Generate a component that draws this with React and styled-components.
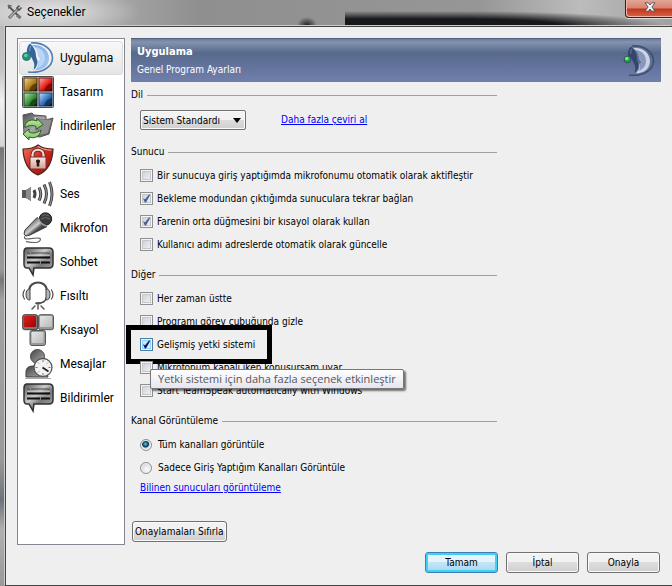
import React, { useState } from 'react'
import styled, { createGlobalStyle } from 'styled-components'

const TeamSpeakIcon = ({ dim }) => (
  <svg viewBox="0 0 32 32" width="32" height="32" aria-hidden="true">
    <defs>
      <linearGradient id={dim ? 'faceDim' : 'face'} x1="0" y1="0" x2="1" y2="1">
        <stop offset="0" stopColor={dim ? '#d5dcea' : '#7fabe2'} />
        <stop offset="1" stopColor={dim ? '#c3cce0' : '#a5c8f2'} />
      </linearGradient>
    </defs>
    <path d="M9 1C21 0 30.500 7 30.500 16S20 31.500 6 30" fill="none" stroke={dim ? '#3f4f74' : '#4d7db3'} strokeWidth="1.600" />
    <path d="M10 3C20 2 27 8 27 16c0 7-5 12-14 12.500 3-4 4-6 3-9l3-2-3-4c0-5-2-8-6-10.500z" fill={`url(#${dim ? 'faceDim' : 'face'})`} />
    <path d="M13 5c7 1 10 6 10 11 0 5-3 8-7 10 1-3 1-5 0-7l3-2-3-4c0-3-1-5-3-8z" fill={dim ? '#8796bb' : '#b9d6f7'} />
    <path d="M8 1.500C12 5 14 9 14 14c0 2 1.500 4 1.500 6 0 3-2 7-4 7.500 2-5 0-8-1.500-11C8.500 13.500 6.500 11 5 10.500 4.500 7 6 3 8 1.500z" fill={dim ? '#34466b' : '#35649b'} />
    <path d="M9 4q-2 2-1 5" fill="none" stroke={dim ? '#5b6d92' : '#6f98c7'} strokeWidth="1.200" />
    <circle cx="4.500" cy="14.500" r={dim ? '3.400' : '4'} fill={dim ? '#18a83c' : '#21946f'} stroke={dim ? '#34516a' : '#346a8f'} />
    <circle cx="3.800" cy="13.500" r="1.800" fill={dim ? '#5dfb62' : '#54d6a0'} />
  </svg>
)

const tiles = [
  { id: 'gold', x: 2, y: 2, from: '#f6d79b', to: '#a8740f', edge: '#4a3617' },
  { id: 'red', x: 17, y: 2, from: '#ffb3a5', to: '#e3130c', edge: '#6c1814' },
  { id: 'green', x: 2, y: 17, from: '#b5e8b0', to: '#2c862f', edge: '#204a20' },
  { id: 'blue', x: 17, y: 17, from: '#c4e3ff', to: '#2465b3', edge: '#1e3d62' },
]

const ThemeIcon = () => (
  <svg viewBox="0 0 32 32" width="32" height="32" aria-hidden="true">
    <defs>
      {tiles.map(({ id, from, to }) => (
        <linearGradient key={id} id={`tile-${id}`} x1="0" y1="0" x2="1" y2="1">
          <stop offset="0" stopColor={from} />
          <stop offset=".6" stopColor={to} />
        </linearGradient>
      ))}
    </defs>
    <rect x=".5" y=".5" width="31" height="31" rx="1" fill="#c4c4c4" stroke="#4a4a50" />
    {tiles.map(({ id, x, y, edge }) => (
      <g key={id} transform={`translate(${x} ${y})`}>
        <rect width="13" height="13" fill={`url(#tile-${id})`} stroke={edge} />
        <path d="M13 5Q7 6 5 13h8z" fill="#000" opacity=".45" />
        <path d="M13 10q-2 1-3 3h3z" fill="#000" opacity=".5" />
      </g>
    ))}
  </svg>
)

const DownloadsIcon = () => (
  <svg viewBox="0 0 32 32" width="32" height="32" aria-hidden="true">
    <defs>
      <linearGradient id="folder" x1="0" y1="0" x2="1" y2="1">
        <stop offset="0" stopColor="#4c4c4c" />
        <stop offset=".5" stopColor="#a8a8a8" />
        <stop offset="1" stopColor="#3e3e3e" />
      </linearGradient>
      <linearGradient id="arrow" x1="0" y1="0" x2="0" y2="1">
        <stop offset="0" stopColor="#c6efad" />
        <stop offset="1" stopColor="#72bb55" />
      </linearGradient>
    </defs>
    <path d="M1 5l9-2 2 2 12 1v4l7-2-4 16-9 3-16-2z" fill="url(#folder)" stroke="#555" />
    <path d="M12 7l11 1-1 6-9-3z" fill="#eee" stroke="#888" strokeWidth=".5" />
    <path d="M14 8.500l16 1-4 14-9 2z" fill="#8f8f8f" stroke="#555" strokeWidth=".6" />
    <path d="M3 15c2-5 7-6 12-4V8.500l6 6-7 5v-3c-4-2-7-1-11 1z" fill="url(#arrow)" stroke="#295b22" />
    <path d="M19 20c-1 7-7 9-12 7v3l-6-6 6-5v3c4 2 8 1 12-2z" fill="url(#arrow)" stroke="#295b22" />
  </svg>
)

const SecurityIcon = () => (
  <svg viewBox="0 0 32 32" width="32" height="32" aria-hidden="true">
    <defs>
      <linearGradient id="shield" x1="0" y1="0" x2="1" y2="1">
        <stop offset="0" stopColor="#f1765f" />
        <stop offset=".5" stopColor="#cf2519" />
        <stop offset="1" stopColor="#8d120d" />
      </linearGradient>
      <linearGradient id="lock" x1="0" y1="0" x2="0" y2="1">
        <stop offset="0" stopColor="#f6e9e7" />
        <stop offset="1" stopColor="#d69d96" />
      </linearGradient>
    </defs>
    <path d="M16 1c4 3 9 4 15 4-.5 13-5 22-15 26C6 27 1.500 18 1 5c6 0 11-1 15-4z" fill="url(#shield)" stroke="#47231f" strokeWidth="1.200" />
    <path d="M16 2.500c4 2.500 8 3.500 13.500 3.700" fill="none" stroke="#ffb0a0" />
    <path d="M10.500 14v-3c0-7 11-7 11 0v3" fill="none" stroke="#732c27" strokeWidth="4" />
    <path d="M10.500 14v-3c0-7 11-7 11 0v3" fill="none" stroke="#eddcda" strokeWidth="2.200" />
    <rect x="8" y="13" width="16" height="12" rx="1" fill="url(#lock)" stroke="#7a302b" />
    <path d="M16 15.500a2 2 0 011.300 3.500v3.500h-2.600V19A2 2 0 0116 15.500z" fill="#271513" />
    <path d="M14 17h4" stroke="#271513" />
  </svg>
)

const SoundIcon = () => (
  <svg viewBox="0 0 32 32" width="32" height="32" aria-hidden="true">
    <path d="M0 12h4l5-3v14l-5-3H0z" fill="#555" />
    <path d="M4 12l5-3v14l-5-3z" fill="#8b8b8b" />
    <g fill="none">
      <g stroke="#444" strokeWidth="3">
        <path d="M12 12q2 4 0 8" />
        <path d="M17 9.500q3.500 6.500 0 13" />
        <path d="M22 6.500q5 9.500 0 19" />
        <path d="M27.500 4q5 12 0 24" />
      </g>
      <path d="M17 9.500q3.500 6.500 0 13M22 6.500q5 9.500 0 19M27.500 4q5 12 0 24" stroke="#999" />
    </g>
  </svg>
)

const MicIcon = () => (
  <svg viewBox="0 0 32 32" width="32" height="32" aria-hidden="true">
    <defs>
      <linearGradient id="mic" x1="0" y1="0" x2="1" y2="1">
        <stop offset=".3" stopColor="#777" />
        <stop offset=".48" stopColor="#d0d0d0" />
        <stop offset=".6" stopColor="#555" />
        <stop offset=".8" stopColor="#222" />
      </linearGradient>
    </defs>
    <path d="M15 5.500l10 9L8 23l-4 1-2-2 1-4z" fill="url(#mic)" stroke="#3a3a3a" />
    <circle cx="23.500" cy="7" r="6.200" fill="#3b3b3f" stroke="#222" />
    <path d="M20 4q3-3 7 0M19 7q4-3 9 0" fill="none" stroke="#77777c" strokeWidth=".8" />
    <path d="M16.500 6.500q2 6 8 7.500" fill="none" stroke="#aaa" strokeWidth="1.300" />
    <path d="M3 24c-2 4 3 3 7 2.500s10-1.500 8 2-9 2-14 1" fill="none" stroke="#666" strokeWidth="1.200" />
  </svg>
)

const ChatIcon = () => (
  <svg viewBox="0 0 32 32" width="32" height="32" aria-hidden="true">
    <defs>
      <linearGradient id="bubble" x1="0" y1="0" x2="1" y2="1">
        <stop offset="0" stopColor="#555" />
        <stop offset=".4" stopColor="#c8c8c8" />
        <stop offset=".6" stopColor="#777" />
        <stop offset="1" stopColor="#aaa" />
      </linearGradient>
    </defs>
    <path d="M5 2h22q4 0 4 4v12q0 4-4 4H12l-1 7-4-7H5q-3 0-3-4V6q0-4 3-4z" fill="url(#bubble)" stroke="#303030" strokeWidth="1.500" />
    <path d="M5 7h3M9 7h19" stroke="#444" strokeWidth="1.200" />
    <path d="M5 11.500h23M5 16.500h13M19 16.500h9" stroke="#111" strokeWidth="1.800" />
    <path d="M5 9.500h23M5 14h23" stroke="#ccc" strokeWidth=".7" />
  </svg>
)

const WhisperIcon = () => (
  <svg viewBox="0 0 32 32" width="32" height="32" aria-hidden="true">
    <g fill="none" stroke="#4b4b4b" strokeLinecap="round">
      <path d="M7 10C8 0 24 0 25 10" strokeWidth="2.200" />
      <path d="M24 18c0 4-4 5-8 5.500" strokeWidth="1.500" />
      <path d="M2.500 10q-3 4.500 0 9M29.500 10q3 4.500 0 9" strokeWidth="1.200" />
      <path d="M16 25v4M13 26l-3 3M19 26l3 3" strokeWidth="1.400" />
    </g>
    <path d="M8 9v11q-4 0-4-5.500T8 9zM24 9v11q4 0 4-5.500T24 9z" fill="#b5b5b5" stroke="#444" />
    <ellipse cx="16" cy="23.300" rx="3" ry="1.300" fill="#555" />
  </svg>
)

const HotkeyIcon = () => (
  <svg viewBox="0 0 32 32" width="32" height="32" aria-hidden="true">
    <defs>
      <linearGradient id="key" x1="0" y1="0" x2="1" y2="1">
        <stop offset="0" stopColor="#e6e6e6" />
        <stop offset="1" stopColor="#b9b9b9" />
      </linearGradient>
      <linearGradient id="keyRed" x1="0" y1="0" x2="1" y2="1">
        <stop offset="0" stopColor="#d8231e" />
        <stop offset="1" stopColor="#a30000" />
      </linearGradient>
    </defs>
    <rect x=".7" y=".7" width="15" height="15" rx="2" fill="#777" stroke="#483838" />
    <rect x="2" y="2" width="12" height="11" rx="1" fill="url(#keyRed)" />
    <rect x="16.500" y=".7" width="15" height="15" rx="2" fill="#999" stroke="#555" />
    <rect x="18" y="2" width="12" height="11" rx="1" fill="url(#key)" />
    <rect x="8" y="16.500" width="15.500" height="15" rx="2" fill="#999" stroke="#555" />
    <rect x="9.500" y="18" width="12" height="11" rx="1" fill="url(#key)" />
  </svg>
)

const MessagesIcon = () => (
  <svg viewBox="0 0 32 32" width="32" height="32" aria-hidden="true">
    <defs>
      <linearGradient id="person" x1="0" y1="0" x2="1" y2="1">
        <stop offset="0" stopColor="#444" />
        <stop offset="1" stopColor="#b0b0b0" />
      </linearGradient>
    </defs>
    <path d="M4 29V24q0-6 7-6h12l3 11z" fill="url(#person)" stroke="#3b3b3b" />
    <circle cx="15.500" cy="8.500" r="7" fill="url(#person)" stroke="#484848" />
    <circle cx="21" cy="19.500" r="9" fill="#f2f2f2" stroke="#555" strokeWidth="1.300" />
    <path d="M20.500 19.500l6 4" stroke="#222" strokeWidth="1.800" />
    <path d="M21 12v2M21 25v2M13.500 19.500h2M26.500 19.500h2M16 14.500l1 1M26 14.500l-1 1M16 24.500l1-1" stroke="#777" />
    <path d="M3 30.500h26" stroke="#aaa" />
  </svg>
)

const ToolsIcon = () => (
  <svg viewBox="0 0 16 16" width="16" height="16" aria-hidden="true">
    <path d="M1.500 2l9 9M10.500 11l3 3" stroke="#555" strokeWidth="1.800" />
    <path d="M2 14L11 5" stroke="#555" strokeWidth="2.800" />
    <path d="M2.500 13.500L11 5" stroke="#bbb" strokeWidth="1.200" />
    <path d="M10 11l3.500 3" stroke="#777" strokeWidth="3" />
    <path d="M14.500 3.500L12 6 10 4l2.500-2.500" fill="none" stroke="#555" strokeWidth="1.700" />
    <path d="M1 1l4 1M1 1l1 4" stroke="#666" />
  </svg>
)

const CloseIcon = () => (
  <svg viewBox="0 0 12 10" width="12" height="10" aria-hidden="true">
    <path d="M1 .8h3.300L6 3 7.700.8H11L7.900 5 11 9.200H7.700L6 7 4.300 9.200H1L4.100 5z" fill="#f4f4f4" stroke="#4b4f5c" strokeWidth=".9" />
  </svg>
)

const categories = [
  ['Uygulama', TeamSpeakIcon],
  ['Tasarım', ThemeIcon],
  ['İndirilenler', DownloadsIcon],
  ['Güvenlik', SecurityIcon],
  ['Ses', SoundIcon],
  ['Mikrofon', MicIcon],
  ['Sohbet', ChatIcon],
  ['Fısıltı', WhisperIcon],
  ['Kısayol', HotkeyIcon],
  ['Mesajlar', MessagesIcon],
  ['Bildirimler', ChatIcon],
]

const serverOptions = [
  ['Bir sunucuya giriş yaptığımda mikrofonumu otomatik olarak aktifleştir', false],
  ['Bekleme modundan çıktığımda sunuculara tekrar bağlan', true],
  ['Farenin orta düğmesini bir kısayol olarak kullan', true],
  ['Kullanıcı adımı adreslerde otomatik olarak güncelle', false],
]

const Check = ({ label, defaultChecked, hot, children }) => (
  <Row>
    <CheckLabel>
      <Box>
        <CheckInput type="checkbox" defaultChecked={defaultChecked} $hot={hot} />
        <Tick viewBox="0 0 13 13" width="13" height="13" $hot={hot} aria-hidden="true">
          <path d="M3 6.200l2 1L9 2.500l1.300.3L6 10.500H4.800z" />
        </Tick>
      </Box>
      {label}
    </CheckLabel>
    {children}
  </Row>
)

const Section = ({ title, children }) => (
  <Group>
    <Legend>{title}</Legend>
    <GroupBody>{children}</GroupBody>
  </Group>
)

const App = () => {
  const [active, setActive] = useState('Uygulama')

  return (
    <>
      <GlobalStyle />
      <Window>
        <TitleBar>
          <ToolsIcon />
          <Title>Seçenekler</Title>
          <CloseButton type="button" aria-label="Kapat"><CloseIcon /></CloseButton>
        </TitleBar>
        <Client>
          <Main>
            <Sidebar>
              {categories.map(([name, Icon]) => (
                <SidebarItem key={name} type="button" $active={active === name} onClick={() => setActive(name)}>
                  <Icon />
                  {name}
                </SidebarItem>
              ))}
            </Sidebar>
            <Content>
              <Banner>
                <div>
                  <BannerTitle>Uygulama</BannerTitle>
                  <BannerText>Genel Program Ayarları</BannerText>
                </div>
                <TeamSpeakIcon dim />
              </Banner>
              <Settings>
                <Section title="Dil">
                  <LanguageRow>
                    <SelectWrap>
                      <Select aria-label="Dil" defaultValue="system">
                        <option value="system">Sistem Standardı</option>
                      </Select>
                      <Chevron viewBox="0 0 8 5" width="8" height="5" aria-hidden="true">
                        <path d="M0 0h8L4 5z" />
                      </Chevron>
                    </SelectWrap>
                    <Link href="#ceviri">Daha fazla çeviri al</Link>
                  </LanguageRow>
                </Section>
                <Section title="Sunucu">
                  {serverOptions.map(([label, checked]) => (
                    <Check key={label} label={label} defaultChecked={checked} />
                  ))}
                </Section>
                <Section title="Diğer">
                  <Check label="Her zaman üstte" />
                  <Check label="Programı görev çubuğunda gizle" />
                  <Check label="Gelişmiş yetki sistemi" defaultChecked hot>
                    <Highlight />
                    <Tooltip role="tooltip">Yetki sistemi için daha fazla seçenek etkinleştir</Tooltip>
                  </Check>
                  <Check label="Mikrofonum kapalı iken konuşursam uyar" />
                  <Check label="Start TeamSpeak automatically with Windows" />
                </Section>
                <Section title="Kanal Görüntüleme">
                  <Row>
                    <CheckLabel>
                      <Radio type="radio" name="channels" defaultChecked />
                      Tüm kanalları görüntüle
                    </CheckLabel>
                  </Row>
                  <Row>
                    <CheckLabel>
                      <Radio type="radio" name="channels" />
                      Sadece Giriş Yaptığım Kanalları Görüntüle
                    </CheckLabel>
                  </Row>
                  <Link href="#sunucular">Bilinen sunucuları görüntüleme</Link>
                </Section>
              </Settings>
              <ResetButton type="button">Onaylamaları Sıfırla</ResetButton>
            </Content>
          </Main>
          <Footer>
            <Button type="button" $primary>Tamam</Button>
            <Button type="button">İptal</Button>
            <Button type="button">Onayla</Button>
          </Footer>
        </Client>
      </Window>
    </>
  )
}

const GlobalStyle = createGlobalStyle`
    *{
        box-sizing: border-box;
    }

    body{
        margin: 0;
        color: #000;
        font-family: "DejaVu Sans Condensed", "DejaVu Sans", sans-serif;
        font-size: 10px;
    }

    button, select{
        font: inherit;
        color: inherit;
    }
`;

const Window = styled.div`
    min-height: 100vh;
    display: flex;
    flex-direction: column;
    padding-left: 5px;
    background: linear-gradient(to bottom, #b5b5b5 0, #c4c4c4 70px, #f0f0f0 100px, #d5d5d5 146px, #777 148px, #8c8c8c 180px, #999 270px, #777 280px, #a2a2a2 300px, #999 460px, #6d737a 500px, #b0b0b0 530px, #999 100%);
`;

const TitleBar = styled.header`
    height: 26px;
    display: flex;
    align-items: flex-start;
    margin-left: -5px;
    padding: 4px 0 0 7px;
    gap: 4px;
    background:
        radial-gradient(ellipse 10px 8px at 307px 25px, #222 0, #2220 100%),
        linear-gradient(to bottom, #17181b00 11px, #17181b 19px) 345px 0 / 130px 26px no-repeat,
        radial-gradient(ellipse 190px 15px at 0 100%, #17181b 45%, #17181b00 100%) 475px 0 / 190px 26px no-repeat,
        radial-gradient(ellipse 90px 24px at 50px 12px, #e6e6e6 0, #e6e6e600 100%),
        linear-gradient(to right, #bbb 0, #a2a2a2 130px, #8f8f8f 200px, #969696 480px, #bcbcbc 580px, #a0a0a0 100%);
`;

const Title = styled.h1`
    flex: 1;
    margin: 0;
    font: 400 12px/16px "Segoe UI", Roboto, sans-serif;
`;

const CloseButton = styled.button`
    width: 47px;
    height: 18px;
    margin-top: -4px;
    display: flex;
    align-items: center;
    justify-content: center;
    padding: 0 0 4px 2px;
    border: 1px solid #4b1511;
    border-width: 0 0 1px 1px;
    border-radius: 0 0 0 4px;
    background: linear-gradient(to bottom, #e3a597 0, #d88370 8px, #c2351b 9px, #d4644a 100%);
    box-shadow: inset 1px -1px #f0b5a8, 0 1px #ddd;
`;

const Client = styled.div`
    flex: 1;
    display: flex;
    flex-direction: column;
    justify-content: space-between;
    padding: 11px 11px 12px;
    border-style: solid;
    border-color: #444;
    border-width: 1px 0 1px 1px;
    box-shadow: -1px -1px #ccc;
    background: #efefef;
`;

const Main = styled.main`
    display: flex;
    gap: 6px;
`;

const Sidebar = styled.nav`
    width: 108px;
    flex: none;
    padding: 2px 1px;
    border: 1px solid #828790;
    background: white;
`;

const SidebarItem = styled.button`
    width: 100%;
    height: 34px;
    display: flex;
    align-items: center;
    gap: 6px;
    padding: 0 2px;
    border: 1px solid ${({ $active }) => ($active ? '#d9d9d9' : 'transparent')};
    border-radius: 3px;
    background: ${({ $active }) => ($active ? 'linear-gradient(#f8f8f8, #e5e5e5)' : 'none')};
    font: 400 12px/16px "Segoe UI", Roboto, sans-serif;
    white-space: nowrap;

    svg{
        flex: none;
    }
`;

const Content = styled.div`
    flex: 1;
    min-width: 0;
    padding-bottom: 3px;
`;

const Banner = styled.div`
    height: 44px;
    display: flex;
    align-items: center;
    justify-content: space-between;
    padding: 0 6px;
    border-top: 1px solid #4f6080;
    background: linear-gradient(to bottom, #6a7b99 0, #8493af 3px, #576a8b 14px, #62729a 26px, #7080ac 100%);
    color: white;
`;

const BannerTitle = styled.h2`
    margin: 0;
    font-size: 11px;
    line-height: 18px;
`;

const BannerText = styled.p`
    margin: 0;
    line-height: 18px;
`;

const Settings = styled.div`
    width: 68%;
    min-width: 366px;
    display: flex;
    flex-direction: column;
    gap: 12px;
    padding-top: 6px;
`;

const Group = styled.section`
    display: flex;
    flex-direction: column;
    gap: 5px;
`;

const Legend = styled.h3`
    margin: 0;
    display: flex;
    align-items: center;
    gap: 4px;
    font-size: 10px;
    font-weight: 400;
    line-height: 14px;

    &:after{
        content: '';
        flex: 1;
        height: 1px;
        background: #a0a0a0;
    }
`;

const GroupBody = styled.div`
    display: flex;
    flex-direction: column;
    align-items: flex-start;
    padding-left: 9px;
`;

const LanguageRow = styled.div`
    height: 26px;
    display: flex;
    align-items: center;
    gap: 35px;
`;

const SelectWrap = styled.div`
    display: grid;
    align-items: center;
    width: 106px;
`;

const Select = styled.select`
    grid-area: 1 / 1;
    appearance: none;
    height: 20px;
    padding: 0 16px 0 2px;
    border: 1px solid #707070;
    border-radius: 2px;
    background: linear-gradient(to bottom, #f2f2f2 50%, #ddd 50%, #cfcfcf);
    box-shadow: inset 0 0 0 1px #fafafa;
`;

const Chevron = styled.svg`
    grid-area: 1 / 1;
    justify-self: end;
    margin-right: 5px;
    pointer-events: none;
`;

const Link = styled.a`
    color: #0000ff;
    line-height: 18px;
`;

const Row = styled.div`
    position: relative;
    height: 23px;
    display: flex;
    align-items: center;
`;

const CheckLabel = styled.label`
    display: flex;
    align-items: center;
    gap: 4px;
    line-height: 16px;
    white-space: nowrap;
`;

const Box = styled.span`
    display: grid;
`;

const CheckInput = styled.input`
    grid-area: 1 / 1;
    appearance: none;
    width: 13px;
    height: 13px;
    margin: 0;
    border: 1px solid ${({ $hot }) => ($hot ? '#4a80a5' : '#8e8f8f')};
    background: ${({ $hot }) => ($hot ? 'linear-gradient(135deg, #b9e1f8, #e6f6fe)' : 'linear-gradient(135deg, #c9ccd1, #f6f6f6)')};
    box-shadow: inset 0 0 0 1px ${({ $hot }) => ($hot ? '#def9fa' : '#f4f4f4')}, inset 0 0 0 2px ${({ $hot }) => ($hot ? '#9bd2f2' : '#c4c8cd')};
`;

const Tick = styled.svg`
    grid-area: 1 / 1;
    visibility: hidden;
    pointer-events: none;
    fill: ${({ $hot }) => ($hot ? '#04227b' : '#4a5f97')};

    ${CheckInput}:checked + &{
        visibility: visible;
    }
`;

const Radio = styled.input`
    appearance: none;
    width: 12px;
    height: 12px;
    margin: 0 2px 0 0;
    border: 1px solid #8e8f8f;
    border-radius: 50%;
    background: radial-gradient(circle at 60% 65%, #f4f4f4 20%, #bfc3c8);
    box-shadow: inset 0 0 0 1px #f4f4f4;

    &:checked{
        background: radial-gradient(circle at 45% 40%, #6fd0ef 0, #13628c 2px, #0d3551 3px, #c2d0da 4px, #e8e8e8 5px);
    }
`;

/* hand-drawn frame around the option */
const Highlight = styled.div`
    position: absolute;
    top: -8px;
    left: -14px;
    width: 146px;
    height: 39px;
    border: 5px solid #000;
    pointer-events: none;
`;

const Tooltip = styled.div`
    position: absolute;
    z-index: 1;
    top: 36px;
    left: 10px;
    height: 20px;
    padding: 0 7px;
    border: 1px solid #767676;
    border-radius: 2px;
    background: linear-gradient(to bottom, #fff, #e4e5f0);
    box-shadow: 2px 2px 2px #0008;
    color: #575757;
    font: 400 11px/18px "Segoe UI", "Open Sans", sans-serif;
    white-space: nowrap;
`;

const Button = styled.button`
    min-width: 73px;
    height: 21px;
    padding: 0 2px;
    border: 1px solid ${({ $primary }) => ($primary ? '#3c7fb1' : '#707070')};
    border-radius: 3px;
    background: ${({ $primary }) => ($primary ? 'linear-gradient(to bottom, #e5f4fc 50%, #c4e5f6 50%, #a8d8f0)' : 'linear-gradient(to bottom, #f2f2f2 50%, #ddd 50%, #cfcfcf)')};
    box-shadow: ${({ $primary }) => ($primary ? 'inset 0 0 0 2px #3fd0f5' : 'inset 0 0 0 1px #fafafa')};
`;

const ResetButton = styled(Button)`
    margin: 24px 0 0 1px;
`;

const Footer = styled.footer`
    display: flex;
    justify-content: flex-end;
    gap: 8px;
    padding-right: 1px;
`;

export default App
